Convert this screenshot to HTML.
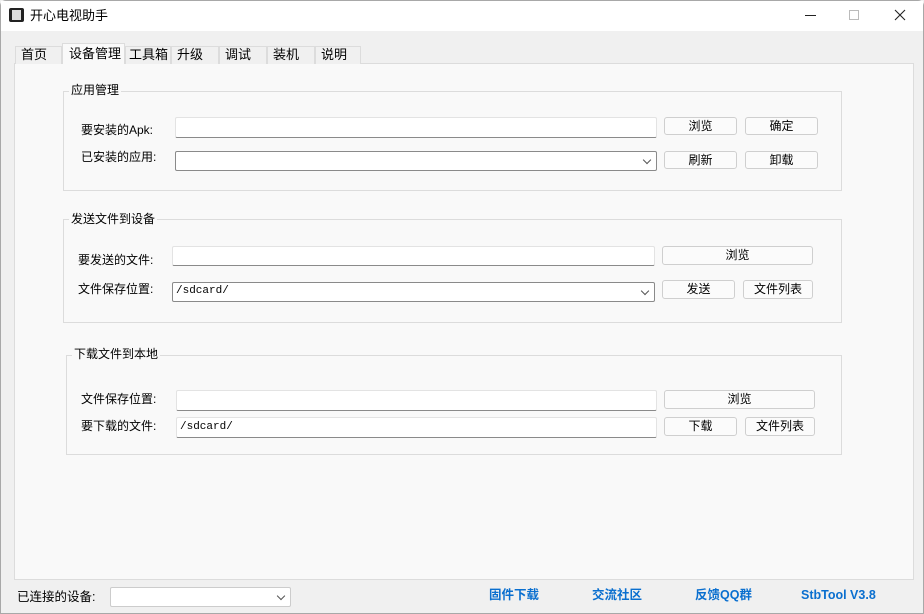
<!DOCTYPE html>
<html><head><meta charset="utf-8"><style>
*{margin:0;padding:0;box-sizing:border-box}
body{width:924px;height:614px;background:#f0f0f0;font-family:"Liberation Sans","Noto Sans CJK SC","WenQuanYi Zen Hei",sans-serif;font-size:12px;color:#000;position:relative;overflow:hidden}
.a{position:absolute}
.win{left:0;top:0;width:924px;height:614px;border:1px solid #a8a8a8;border-radius:6px 6px 0 0}
.title{left:1px;top:1px;width:922px;height:30px;background:#fff}
.tab{top:46px;height:18px;border:1px solid #dcdcdc;border-bottom:none;background:#f0f0f0;font-size:13px;line-height:16px;padding-left:5px}
.panel{left:14px;top:63px;width:900px;height:517px;background:#f9f9f9;border:1px solid #dcdcdc}
.grp{border:1px solid #dcdcdc}
.gt{background:#f9f9f9;padding:0 2px;font-size:12px;line-height:14px}
.in{background:#fff;border:1px solid #e3e3e3;border-bottom:1px solid #8a8a8a;border-radius:2px;font-family:"Liberation Mono",monospace;font-size:11px;line-height:18px;padding-left:3px}
.cb{background:#fff;border:1px solid #8a8a8a;border-radius:2px;font-family:"Liberation Mono",monospace;font-size:11px;line-height:17px;padding-left:3px}
.cb:after{content:"";position:absolute;right:6px;top:5px;width:5px;height:5px;border-right:1px solid #555;border-bottom:1px solid #555;transform:rotate(45deg)}
.bt{background:#fbfbfb;border:1px solid #cfcfcf;border-radius:3px;text-align:center;line-height:16px;font-size:12px}
.lb{font-size:12px;line-height:14px}
.lk{color:#0a6fcf;font-weight:bold;font-size:12.5px;top:587px;line-height:16px;height:16px}
</style></head><body>
<div class="a win"></div>
<div class="a title"></div>
<div class="a" style="left:9px;top:8px;width:15px;height:14px;background:#222;border-radius:2px"></div>
<div class="a" style="left:12px;top:10px;width:9px;height:10px;background:#ddd"></div>
<div class="a" style="left:30px;top:8px;font-size:13px;line-height:16px">开心电视助手</div>
<div class="a" style="left:805px;top:15px;width:11px;height:1px;background:#222"></div>
<div class="a" style="left:849px;top:10px;width:10px;height:10px;border:1px solid #bbb"></div>
<svg class="a" style="left:894px;top:9px" width="12" height="12"><path d="M1 1L11 11M11 1L1 11" stroke="#222" stroke-width="1.1"/></svg>

<div class="a panel"></div>
<div class="a tab" style="left:15px;width:47px">首页</div>
<div class="a tab" style="left:62px;top:43px;height:21px;width:63px;background:#f9f9f9;line-height:19px;padding-left:6px">设备管理</div>
<div class="a tab" style="left:125px;width:46px;padding-left:3px">工具箱</div>
<div class="a tab" style="left:171px;width:48px">升级</div>
<div class="a tab" style="left:219px;width:48px">调试</div>
<div class="a tab" style="left:267px;width:48px">装机</div>
<div class="a tab" style="left:315px;width:46px">说明</div>

<div class="a grp" style="left:63px;top:91px;width:779px;height:100px"></div>
<div class="a gt" style="left:69px;top:83px">应用管理</div>
<div class="a lb" style="left:81px;top:123px">要安装的Apk:</div>
<div class="a lb" style="left:81px;top:150px">已安装的应用:</div>
<div class="a in" style="left:175px;top:117px;width:482px;height:21px"></div>
<div class="a cb" style="left:175px;top:151px;width:482px;height:20px"></div>
<div class="a bt" style="left:664px;top:117px;width:73px;height:18px">浏览</div>
<div class="a bt" style="left:745px;top:117px;width:73px;height:18px">确定</div>
<div class="a bt" style="left:664px;top:151px;width:73px;height:18px">刷新</div>
<div class="a bt" style="left:745px;top:151px;width:73px;height:18px">卸载</div>

<div class="a grp" style="left:63px;top:219px;width:779px;height:104px"></div>
<div class="a gt" style="left:69px;top:212px">发送文件到设备</div>
<div class="a lb" style="left:78px;top:253px">要发送的文件:</div>
<div class="a lb" style="left:78px;top:282px">文件保存位置:</div>
<div class="a in" style="left:172px;top:246px;width:483px;height:20px"></div>
<div class="a cb" style="left:172px;top:282px;width:483px;height:20px">/sdcard/</div>
<div class="a bt" style="left:662px;top:246px;width:151px;height:19px">浏览</div>
<div class="a bt" style="left:662px;top:280px;width:73px;height:19px">发送</div>
<div class="a bt" style="left:743px;top:280px;width:70px;height:19px">文件列表</div>

<div class="a grp" style="left:66px;top:355px;width:776px;height:100px"></div>
<div class="a gt" style="left:72px;top:347px">下载文件到本地</div>
<div class="a lb" style="left:81px;top:392px">文件保存位置:</div>
<div class="a lb" style="left:81px;top:419px">要下载的文件:</div>
<div class="a in" style="left:176px;top:390px;width:481px;height:21px"></div>
<div class="a in" style="left:176px;top:417px;width:481px;height:21px">/sdcard/</div>
<div class="a bt" style="left:664px;top:390px;width:151px;height:19px">浏览</div>
<div class="a bt" style="left:664px;top:417px;width:73px;height:19px">下载</div>
<div class="a bt" style="left:745px;top:417px;width:70px;height:19px">文件列表</div>

<div class="a lb" style="left:17px;top:590px;font-size:12.5px">已连接的设备:</div>
<div class="a cb" style="left:110px;top:587px;width:181px;height:20px;border-color:#ccc"></div>
<div class="a lk" style="left:489px">固件下载</div>
<div class="a lk" style="left:592px">交流社区</div>
<div class="a lk" style="left:695px">反馈QQ群</div>
<div class="a lk" style="left:801px">StbTool V3.8</div>
</body></html>
